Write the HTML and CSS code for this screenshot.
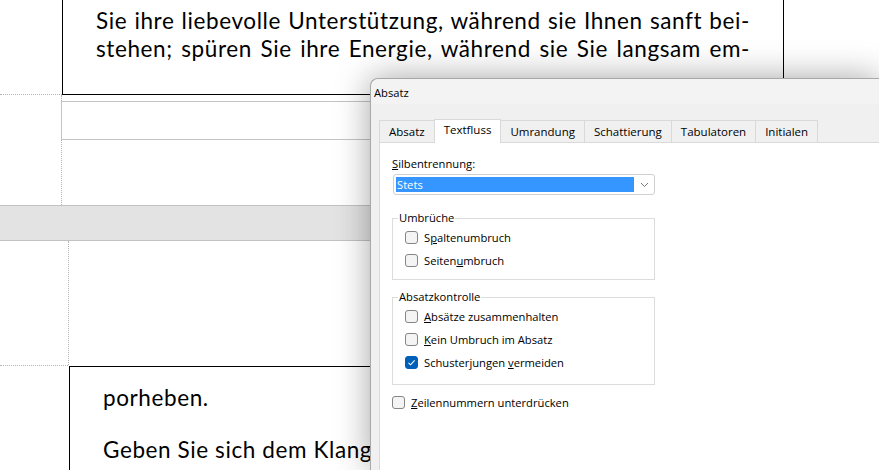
FILE: index.html
```html
<!DOCTYPE html>
<html lang="de">
<head>
    <meta charset="UTF-8">
    <title>Absatz</title>
    <link rel="stylesheet" href="styles.css">
</head>
<body>
    <div class="doc">
        <div class="page-end">
            <div class="corner-guide"></div>
            <div class="textbox textbox-end">
                <p class="just">Sie ihre liebevolle Unterstützung, während sie Ihnen sanft bei-</p>
                <p class="just">stehen; spüren Sie ihre Energie, während sie Sie langsam em-</p>
            </div>
        </div>
        <div class="footer-area">
            <div class="footer-box"></div>
        </div>
        <div class="page-gap"></div>
        <div class="page-top">
            <div class="corner-guide corner-guide-2"></div>
            <div class="side-guide"></div>
        </div>
        <div class="textbox textbox-start">
            <p>porheben.</p>
            <p class="para">Geben Sie sich dem Klang ihrer Stimme hin und lassen Sie sich tragen.</p>
        </div>
    </div>

    <div class="dialog">
        <div class="dialog-title">Absatz</div>
        <div class="dialog-body">
            <div class="tabs">
                <div class="tab">Absatz</div>
                <div class="tab active">Textfluss</div>
                <div class="tab">Umrandung</div>
                <div class="tab">Schattierung</div>
                <div class="tab">Tabulatoren</div>
                <div class="tab">Initialen</div>
            </div>
            <div class="panel">
                <div class="field-label"><u>S</u>ilbentrennung:</div>
                <div class="combo">
                    <span class="combo-value">Stets</span>
                    <svg class="chevron" width="9" height="6" viewBox="0 0 9 6"><path d="M1 1 L4.5 4.5 L8 1" fill="none" stroke="#7a7a7a" stroke-width="1"/></svg>
                </div>

                <fieldset class="group">
                    <legend>Umbrüche</legend>
                    <div class="check-row"><span class="check"></span><span>S<u>p</u>altenumbruch</span></div>
                    <div class="check-row"><span class="check"></span><span>Seiten<u>u</u>mbruch</span></div>
                </fieldset>

                <fieldset class="group group-2">
                    <legend>Absatzkontrolle</legend>
                    <div class="check-row"><span class="check"></span><span><u>A</u>bsätze zusammenhalten</span></div>
                    <div class="check-row"><span class="check"></span><span><u>K</u>ein Umbruch im Absatz</span></div>
                    <div class="check-row">
                        <span class="check checked">
                            <svg width="11" height="11" viewBox="0 0 11 11"><path d="M2.5 5.8 L4.6 7.8 L8.6 3.3" fill="none" stroke="#fff" stroke-width="1.1"/></svg>
                        </span>
                        <span>Schusterjungen <u>v</u>ermeiden</span>
                    </div>
                </fieldset>

                <div class="check-row loose"><span class="check"></span><span><u>Z</u>eilennummern unterdrücken</span></div>
            </div>
        </div>
    </div>
</body>
</html>
```

FILE: styles.css
```css
body {
    margin: 0;
    width: 879px;
    height: 470px;
    overflow: hidden;
    position: relative;
    background-color: #fff;
}

/* document behind the dialog */
.doc {
    font-family: Lato, "Liberation Sans", sans-serif;
    font-size: 22.5px;
    letter-spacing: 0.6px;
    color: #000;
}

.doc p {
    margin: 0;
    line-height: 28px;
}

.page-end {
    display: flex;
    height: 95px;
}

.corner-guide {
    width: 62px;
    border-bottom: 1px dotted #b4b4b4;
}

.textbox {
    box-sizing: border-box;
}

.textbox-end {
    width: 722px;
    border: 1px solid #000;
    border-top: none;
    padding: 7px 0 0 33px;
}

.just {
    width: 654px;
    text-align: justify;
    text-align-last: justify;
}

.footer-area {
    box-sizing: border-box;
    height: 110px;
    padding-top: 6px;
    margin-left: 61px;
    border-left: 1px dotted #b4b4b4;
}

.footer-box {
    box-sizing: border-box;
    margin-left: -1px;
    width: 722px;
    height: 39px;
    border: 1px solid #c4c4c4;
}

.page-gap {
    height: 34px;
    background-color: #e3e3e3;
    border-top: 1px solid #c2c2c2;
    border-bottom: 1px solid #c2c2c2;
}

.page-top {
    display: flex;
    height: 125px;
}

.corner-guide-2 {
    width: 68px;
}

.side-guide {
    height: 124px;
    border-left: 1px dotted #b4b4b4;
}

.textbox-start {
    margin-left: 69px;
    width: 722px;
    height: 110px;
    border-top: 1px solid #000;
    border-left: 1px solid #000;
    padding: 17px 0 0 33px;
}

.para {
    margin-top: 24px !important;
    white-space: nowrap;
}

/* dialog window */
.dialog {
    position: absolute;
    left: 370px;
    top: 78px;
    width: 508px;
    height: 391px;
    background-color: #f0f0f0;
    border: 1px solid #a8a8a8;
    border-right: none;
    border-bottom: none;
    border-radius: 8px 0 0 0;
    box-shadow: 0 0 34px rgba(0, 0, 0, 0.36);
    font-family: "Open Sans", "Noto Sans", sans-serif;
    font-size: 11.2px;
    color: #000;
    overflow: hidden;
}

.dialog-title {
    height: 25px;
    line-height: 27px;
    padding-left: 3px;
    background-color: #f3f3f3;
    border-radius: 8px 0 0 0;
}

.dialog-body {
    padding: 15px 0 0 8px;
}

.tabs {
    display: flex;
    align-items: flex-end;
    height: 23px;
    font-size: 11.5px;
}

.tab {
    box-sizing: border-box;
    height: 22px;
    line-height: 21px;
    padding: 0 9px;
    margin-right: -1px;
    background-color: #f0f0f0;
    border: 1px solid #d9d9d9;
    border-bottom: none;
}

.tab.active {
    position: relative;
    z-index: 1;
    height: 24px;
    line-height: 20px;
    margin-bottom: -1px;
    background-color: #fff;
}

.panel {
    height: 340px;
    background-color: #fff;
    border: 1px solid #d9d9d9;
    border-right: none;
    padding: 12px 0 0 12px;
}

.field-label {
    line-height: 17px;
}

.combo {
    box-sizing: border-box;
    display: flex;
    align-items: center;
    width: 262px;
    height: 21px;
    margin: 2px 0 0 1px;
    padding: 2px;
    border: 1px solid #d0d0d0;
    border-radius: 3px;
}

.combo-value {
    width: 238px;
    height: 15px;
    line-height: 15px;
    padding-left: 1px;
    box-sizing: border-box;
    background-color: #3596ff;
    color: #fff;
}

.chevron {
    margin-left: 6px;
}

.group {
    box-sizing: border-box;
    width: 263px;
    margin: 15px 0 0 0;
    padding: 0 0 7px 12px;
    border: 1px solid #dcdcdc;
}

.group legend {
    margin-left: -7px;
    padding: 0 1px;
    line-height: 16px;
}

.group-2 {
    margin-top: 9px;
    height: 96px;
}

.check-row {
    display: flex;
    align-items: center;
    height: 23px;
    gap: 6px;
}

.check {
    box-sizing: border-box;
    display: flex;
    align-items: center;
    justify-content: center;
    width: 13px;
    height: 13px;
    border: 1px solid #858585;
    border-radius: 3px;
    background-color: #f4f4f4;
}

.check.checked {
    border-color: #005fb8;
    background-color: #005fb8;
}

.loose {
    margin-top: 6px;
}
```
